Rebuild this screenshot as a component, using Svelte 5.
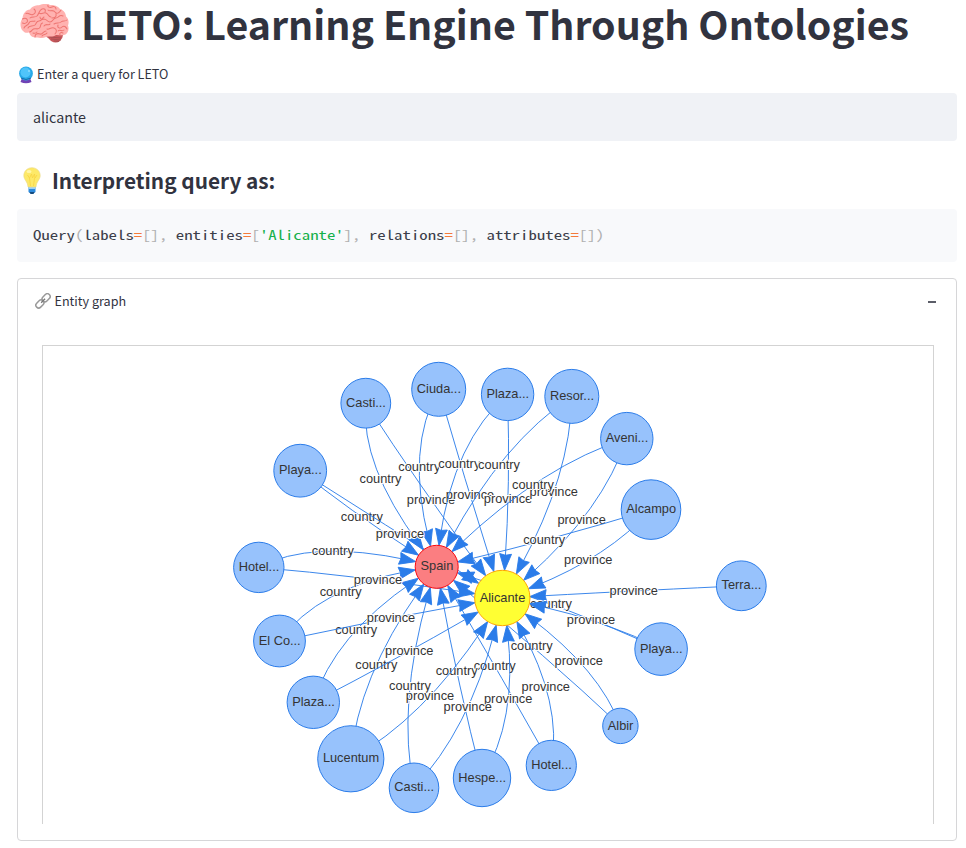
<script>
  const nodes = {
    spain: { label: 'Spain', x: 436.7, y: 566.8, r: 21.5, fill: '#fb7e81', stroke: '#fa0a10' },
    alicante: { label: 'Alicante', x: 502.3, y: 598, r: 27.7, fill: '#ffff33', stroke: '#ffa500' },
    casti: { label: 'Casti...', x: 365.8, y: 403.2, r: 24.9 },
    ciuda: { label: 'Ciuda...', x: 438.7, y: 389.3, r: 27 },
    plaza: { label: 'Plaza...', x: 507.6, y: 394.4, r: 26.2 },
    resor: { label: 'Resor...', x: 571.8, y: 396.4, r: 27 },
    aveni: { label: 'Aveni...', x: 626.8, y: 438.6, r: 26.2 },
    alcampo: { label: 'Alcampo', x: 651, y: 509.6, r: 29.8 },
    terra: { label: 'Terra...', x: 741.3, y: 585.8, r: 24.9 },
    playa2: { label: 'Playa...', x: 661.1, y: 649.1, r: 26.3 },
    albir: { label: 'Albir', x: 620.4, y: 725.9, r: 17.7 },
    hotel2: { label: 'Hotel...', x: 551.3, y: 765.4, r: 25.1 },
    hespe: { label: 'Hespe...', x: 482, y: 778, r: 28.7 },
    casti2: { label: 'Casti...', x: 414, y: 787.8, r: 24.8 },
    lucentum: { label: 'Lucentum', x: 350.8, y: 758.8, r: 33.1 },
    plaza2: { label: 'Plaza...', x: 313.3, y: 702.3, r: 26.2 },
    elco: { label: 'El Co...', x: 279.5, y: 641, r: 25.9 },
    hotel: { label: 'Hotel...', x: 258.8, y: 567.4, r: 25.2 },
    playa: { label: 'Playa...', x: 300.2, y: 470.7, r: 26.4 }
  };

  // Source node, then the midpoint of its country edge and of its province edge.
  const links = [
    ['casti', [380.5, 479], [431, 499.8]],
    ['ciuda', [419.3, 467.2], [470, 495]],
    ['plaza', [459.3, 464.2], [508, 499]],
    ['resor', [499, 465], [553.8, 492]],
    ['aveni', [533, 485], [581.6, 520]],
    ['alcampo', [544.2, 540.2], [588.3, 560]],
    ['terra', null, [633.8, 591]],
    ['playa2', [551, 604.1], [591, 620.1]],
    ['albir', [531.7, 646], [578.8, 661]],
    ['hotel2', [494.7, 666], [545.8, 687.2]],
    ['hespe', [456.7, 671], [508.2, 699.2]],
    ['casti2', [410, 686.2], [467.8, 707]],
    ['lucentum', [376.3, 665.1], [430, 696]],
    ['plaza2', [356.2, 630.1], [409.3, 651]],
    ['elco', [340.7, 592.1], [391, 618.2]],
    ['hotel', [332.8, 551.2], [378, 580]],
    ['playa', [361.8, 517], [400, 534]]
  ];

  const LEN = 16.5;
  const HALF = 0.36;

  function makeEdge(fromId, toId, mid, label) {
    const a = nodes[fromId];
    const b = nodes[toId];
    const via = { x: 2 * mid[0] - (a.x + b.x) / 2, y: 2 * mid[1] - (a.y + b.y) / 2 };
    const at = (t) => ({
      x: (1 - t) ** 2 * a.x + 2 * t * (1 - t) * via.x + t * t * b.x,
      y: (1 - t) ** 2 * a.y + 2 * t * (1 - t) * via.y + t * t * b.y
    });
    let low = 0.4;
    let high = 1;
    for (let i = 0; i < 24; i++) {
      const m = (low + high) / 2;
      const p = at(m);
      if (Math.hypot(p.x - b.x, p.y - b.y) > b.r) low = m;
      else high = m;
    }
    const tip = at(low);
    const guide = at(low - 0.1);
    const ang = Math.atan2(tip.y - guide.y, tip.x - guide.x);
    const pt = (l, w) =>
      `${(tip.x - LEN * (l * Math.cos(ang) + w * Math.sin(ang))).toFixed(2)},${(tip.y - LEN * (l * Math.sin(ang) - w * Math.cos(ang))).toFixed(2)}`;
    // Keep only the part of the curve that ends inside the arrowhead.
    const cut = low - 0.03;
    const end = at(cut);
    const ctrl = { x: a.x + (via.x - a.x) * cut, y: a.y + (via.y - a.y) * cut };
    return {
      label,
      x: mid[0],
      y: mid[1],
      path: `M${a.x},${a.y} Q${ctrl.x},${ctrl.y} ${end.x},${end.y}`,
      arrow: `${pt(0, 0)} ${pt(1, HALF)} ${pt(0.92, 0)} ${pt(1, -HALF)}`
    };
  }

  const edges = links.flatMap(([id, country, province]) => [
    ...(country ? [makeEdge(id, 'spain', country, 'country')] : []),
    makeEdge(id, 'alicante', province, 'province')
  ]);

  const tokens = [
    ['Query', ''], ['(', 'p'], ['labels', ''], ['=', 'o'], ['[],', 'p'], [' entities', ''], ['=', 'o'], ['[', 'p'],
    ["'Alicante'", 's'], ['],', 'p'], [' relations', ''], ['=', 'o'], ['[],', 'p'], [' attributes', ''], ['=', 'o'], ['[])', 'p']
  ];
</script>

<main>
  <h1>
    <svg class="brain" viewBox="0 0 50 40" width="50" height="40">
      <path d="M25 32Q29 34 31 37Q36 40 40 37Q43 34 43.500 29L36 29Z" fill="#c9585c" />
      <path d="M29 33l12 1M31 35l10 1M34 37l5 .5" stroke="#9c4a4d" stroke-width=".7" />
      <path d="M3 27C-.5 24 0 17 2.500 14.500C3 9 6 6 10 5.500C12 2 17 1 19 1.300C23-.7 28 0 30 1C35 .5 39 3 40.500 5.500C44 6 46 10 46 12.500C49 15 49 19 48 21.500C49.500 25 48 30 44 31C41 32 38 30.500 36 31C33 33.500 28 32 26 33C22 35 18 33 15.500 33.500C11 33 9 30 9.500 28C7 29.500 5 29 3 27Z" fill="#ffb2b0" />
      <g fill="none" stroke="#ee7672" stroke-width="1.050" stroke-linecap="round" stroke-linejoin="round">
        <path d="M2.500 15c3-2 5 0 5 2s-3 3-5 2M6 9.500c3-1 4 2 7 1s3-4 1-5.500M10 14c2-2 5 0 7-2s2-6 5-7 4 1 3 3M15 17c-2 1-5-1-6 2s-4 2-5 5M8 24c1-3 5-1 7-3s1-4 4-4 3-3 5-4M9.500 28c2 0 2-2 4-3s4 1 6-1 0-4 3-5M15 33c0-3 2-4 5-3s3-3 6-3M22 32c1-2 4-1 5-3M19 9c3 2 4-1 7 0s2 4 5 4M28 1c-1 2 2 3 4 2s4 0 4 2M28 6c2 2 5-1 7 2s5 0 6-2M24 15c3 0 3 3 6 3s3-4 6-4 3-4 7-2M24 22c2-3 5 0 6-2M27 25c2 1 4-2 7-1s3 4 1 6M34 20c3-2 5 0 7-2s4 0 6-2M38 21c-1 3 2 4 4 2s4 0 5 2M38 27c2-2 4 1 6-1M40 31c-1-2 1-3 3-2M36 10c1 3-2 4-4 4M13 29c2 1 3 0 4-1M20 13c0 2 2 3 4 2" />
      </g>
    </svg>
    <span>LETO: Learning Engine Through Ontologies</span>
  </h1>
  <label class="field" for="query">
    <svg viewBox="0 0 16 18" width="16" height="18">
      <path d="M4 12h8l1.500 4q-5.500 2.500-11 0Z" fill="#7043b5" />
      <circle cx="8" cy="7.500" r="6.900" fill="#28a9e8" />
      <circle cx="7.500" cy="6.500" r="5" fill="#50c4fa" />
      <path d="M3 12q5 3 10 0" stroke="#186eaa" fill="none" />
      <circle cx="11" cy="5" r=".8" fill="#bceaff" />
    </svg>
    <span>Enter a query for LETO</span>
  </label>
  <input id="query" value="alicante" />
  <h3>
    <svg viewBox="0 0 18 28" width="18" height="28">
      <path d="M5.500 19h7v6q-3.500 3-7 0Z" fill="#2d8bdd" />
      <path d="M5.500 20h7v2h-7Z" fill="#9bd0f5" />
      <path d="M6.500 25h5l-1 2h-3Z" fill="#164b7d" />
      <path d="M9 .7C4 .7 .8 4.500 .8 8.500C.8 13 4.500 14 5 20H13C13.500 14 17.200 13 17.200 8.500C17.200 4.500 14 .7 9 .7Z" fill="#fde968" stroke="#e9d785" stroke-width=".6" />
      <path d="M4.500 8l2 3 2-4 1 4 2-4 .5 4 2-3M6.500 11l1 8M11.500 11l-1 8" fill="none" stroke="#f7d344" stroke-width=".8" />
      <ellipse cx="6" cy="4.500" rx="2.500" ry="1.500" fill="#fff6aa" />
    </svg>
    <span>Interpreting query as:</span>
  </h3>
  <pre><code>{#each tokens as [text, kind]}<span class={kind}>{text}</span>{/each}</code></pre>
  <section>
    <header>
      <svg viewBox="0 0 16 16" width="16" height="16" fill="none">
        <g transform="rotate(-45 8 8)">
          <rect x="-.8" y="5.100" width="9" height="5.600" rx="2.800" stroke="#999" stroke-width="1.500" />
          <rect x="8" y="5.100" width="9" height="5.600" rx="2.800" stroke="#999" stroke-width="1.500" />
          <path d="M5.500 7.900h5.500" stroke="#777" stroke-width="1.400" />
        </g>
      </svg>
      <span>Entity graph</span>
      <i></i>
    </header>
    <div class="graph">
      <svg viewBox="43 346 890 478" width="890" height="478">
        {#each edges as e}
          <path d={e.path} class="line" />
          <polygon points={e.arrow} class="arrow" />
          <text x={e.x} y={e.y + 4.1} class="edge-label">{e.label}</text>
        {/each}
        {#each Object.values(nodes) as n}
          <circle cx={n.x} cy={n.y} r={n.r} fill={n.fill ?? '#97c2fc'} stroke={n.stroke ?? '#2b7ce9'} />
          <text x={n.x + 0.2} y={n.y + 3.6}>{n.label}</text>
        {/each}
      </svg>
    </div>
  </section>
</main>

<style>
  :global(body) { background: #fff; }
  main {
    box-sizing: border-box;
    width: 966px;
    height: 848px;
    padding: 0 9px 0 17px;
    overflow: hidden;
    color: #31333f;
    font-family: 'Noto Sans CJK SC', 'Noto Sans', sans-serif;
  }
  svg { display: block; flex: none; }
  h1, h3 { margin: 0; display: flex; align-items: center; white-space: nowrap; }
  h1 { height: 45px; font-size: 39.35px; line-height: 45px; font-weight: 700; padding-left: 3px; gap: 11px; }
  .brain { margin-top: 3px; }
  .field { display: flex; align-items: center; height: 48px; padding: 9px 0 0 1px; gap: 3px; font-size: 12.6px; line-height: 18px; box-sizing: border-box; }
  .field svg { margin-top: 2px; }
  input {
    display: block;
    box-sizing: border-box;
    width: 940px;
    height: 48px;
    padding: 0 16px 1px;
    border: 0;
    border-radius: 4px;
    background: #f0f2f6;
    color: #31333f;
    font: 14.3px 'Noto Sans CJK SC', 'Noto Sans', sans-serif;
  }
  h3 { height: 68px; padding: 12px 0 0 6px; box-sizing: border-box; gap: 11px; font-size: 20.8px; line-height: 30px; font-weight: 600; }
  h3 span { margin-top: -2px; }
  pre {
    margin: 0;
    box-sizing: border-box;
    height: 53px;
    padding: 0 16px;
    line-height: 52px;
    border-radius: 4px;
    background: #f8f9fb;
  }
  code {
    display: inline-block;
    font-family: 'Noto Sans Mono CJK SC', 'DejaVu Sans Mono', monospace;
    font-size: 13px;
    font-weight: 300;
    color: #3c3e4a;
    transform: scaleX(1.292);
    transform-origin: 0 50%;
  }
  .p { color: #b0b0b0; }
  .o { color: #f47a3a; }
  .s { color: #16b04a; }
  section { box-sizing: border-box; height: 563px; margin-top: 16px; border: 1px solid #d6d6d8; border-radius: 4px; padding: 0 22px 0 24px; }
  header { display: flex; align-items: center; height: 44px; gap: 3.500px; margin-left: -7px; font-size: 12.6px; }
  header span { margin-top: -2px; }
  header i { width: 8px; height: 2px; background: #5b5d68; margin: 2px -2px 0 auto; }
  .graph { box-sizing: border-box; width: 892px; height: 479px; margin-top: 22px; border: 1px solid #d3d3d3; border-bottom: 0; }
  .graph text { font: 12.8px 'Liberation Sans', Arial, sans-serif; fill: #343434; text-anchor: middle; }
  .graph .edge-label { stroke: #fff; stroke-width: 1.8px; paint-order: stroke; stroke-linejoin: round; }
  .line { fill: none; stroke: #2b7ce9; stroke-width: .92; }
  .arrow { fill: #2b7ce9; stroke: #2b7ce9; stroke-width: .92; }
</style>
